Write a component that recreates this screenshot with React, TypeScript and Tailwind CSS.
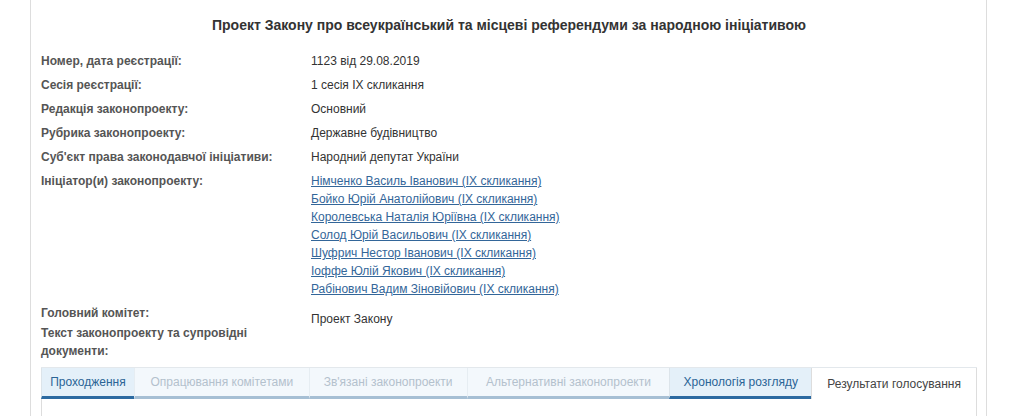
import React from "react";

const rows: [string, string][] = [
  ["Номер, дата реєстрації:", "1123 від 29.08.2019"],
  ["Сесія реєстрації:", "1 сесія IX скликання"],
  ["Редакція законопроекту:", "Основний"],
  ["Рубрика законопроекту:", "Державне будівництво"],
  ["Суб'єкт права законодавчої ініціативи:", "Народний депутат України"],
];

const initiators = [
  "Німченко Василь Іванович (IX скликання)",
  "Бойко Юрій Анатолійович (IX скликання)",
  "Королевська Наталія Юріївна (IX скликання)",
  "Солод Юрій Васильович (IX скликання)",
  "Шуфрич Нестор Іванович (IX скликання)",
  "Іоффе Юлій Якович (IX скликання)",
  "Рабінович Вадим Зіновійович (IX скликання)",
];

export default function App() {
  return (
    <div
      className="bg-white h-[416px] w-[1026px] overflow-hidden"
      style={{ fontFamily: '"Liberation Sans", Arial, sans-serif' }}
    >
      <div className="ml-[30px] w-[957px] h-[416px] border-x border-[#dddddd] pl-[10px] pr-[9px]">
        <h1 className="pt-[16px] text-center text-[14px] leading-[18px] font-bold text-[#333333]">
          Проект Закону про всеукраїнський та місцеві референдуми за народною ініціативою
        </h1>
        <div className="mt-[18px] flex flex-col gap-[6px] text-[12px] leading-[18px]">
          {rows.map(([l, v]) => (
            <div key={l} className="flex">
              <div className="w-[270px] font-bold text-[#555555]">{l}</div>
              <div className="text-[#333333]">{v}</div>
            </div>
          ))}
          <div className="flex">
            <div className="w-[270px] font-bold text-[#555555]">Ініціатор(и) законопроекту:</div>
            <div className="flex flex-col">
              {initiators.map((n) => (
                <a key={n} href="#" className="text-[#336699] underline">
                  {n}
                </a>
              ))}
            </div>
          </div>
          <div className="flex">
            <div className="w-[270px] font-bold text-[#555555]">
              <div>Головний комітет:</div>
              <div className="mt-[2px] w-[230px]">Текст законопроекту та супровідні документи:</div>
            </div>
            <div className="pt-[6px] text-[#333333]">Проект Закону</div>
          </div>
        </div>
        <div className="mt-[7px] w-[936px] text-[12px]">
          <div className="flex border-t border-[#e3e8ec]">
            <div className="w-[93px] h-[31px] flex items-center justify-center bg-[#e4f0f9] text-[#2a6496] border-b-[3px] border-[#2b6aa1] border-l border-l-[#dce4ea]">
              Проходження
            </div>
            <div className="w-[175px] h-[31px] flex items-center justify-center bg-[#f3f8fc] text-[#b3c1cd] border-b-[3px] border-[#a6bfd4] border-l border-l-[#e6edf2]">
              Опрацювання комітетами
            </div>
            <div className="w-[158px] h-[31px] flex items-center justify-center bg-[#f3f8fc] text-[#b3c1cd] border-b-[3px] border-[#a6bfd4] border-l border-l-[#e6edf2]">
              Зв'язані законопроекти
            </div>
            <div className="w-[203px] h-[31px] flex items-center justify-center bg-[#f3f8fc] text-[#b3c1cd] border-b-[3px] border-[#a6bfd4] border-l border-l-[#e6edf2]">
              Альтернативні законопроекти
            </div>
            <div className="w-[142px] h-[31px] flex items-center justify-center bg-[#e4f0f9] text-[#2a6496] border-b-[3px] border-[#2b6aa1] border-l border-l-[#dce4ea]">
              Хронологія розгляду
            </div>
            <div className="w-[166px] h-[31px] flex items-center justify-center bg-white text-[#444444] border-l border-r border-[#dddddd]">
              Результати голосування
            </div>
          </div>
          <div className="h-[18px] border-x border-[#dddddd]" />
        </div>
      </div>
    </div>
  );
}
